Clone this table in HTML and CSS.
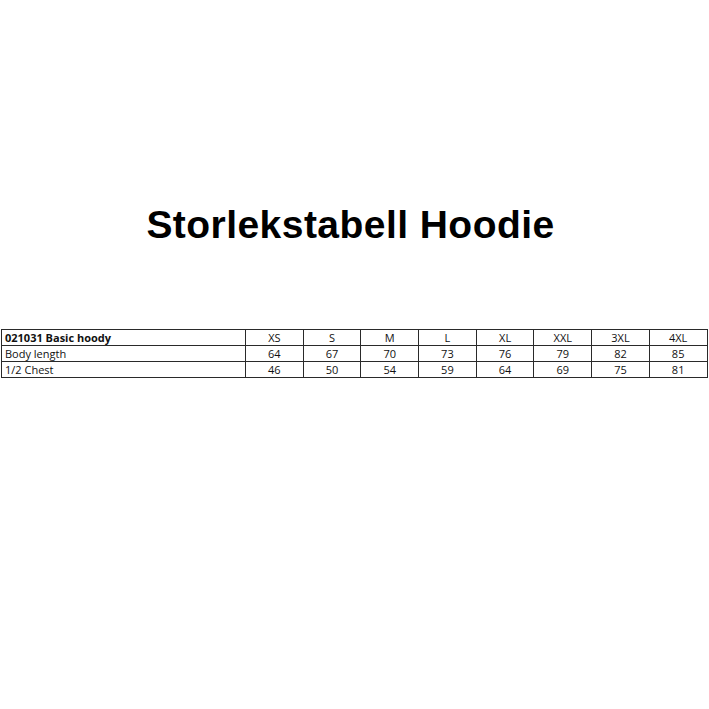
FILE: index.html
```html
<!DOCTYPE html>
<html>
<head>
<meta charset="utf-8">
<link rel="stylesheet" href="styles.css">
</head>
<body>
<div class="page">
  <h1 class="title">Storlekstabell Hoodie</h1>
  <table class="sizes">
    <colgroup>
      <col class="c-label">
      <col span="8" class="c-size">
    </colgroup>
    <tr class="head">
      <td class="label">021031 Basic hoody</td>
      <td>XS</td><td>S</td><td>M</td><td>L</td><td>XL</td><td>XXL</td><td>3XL</td><td>4XL</td>
    </tr>
    <tr>
      <td class="label">Body length</td>
      <td>64</td><td>67</td><td>70</td><td>73</td><td>76</td><td>79</td><td>82</td><td>85</td>
    </tr>
    <tr>
      <td class="label">1/2 Chest</td>
      <td>46</td><td>50</td><td>54</td><td>59</td><td>64</td><td>69</td><td>75</td><td>81</td>
    </tr>
  </table>
</div>
</body>
</html>
```
FILE: styles.css
```css
html, body {
  margin: 0;
  padding: 0;
  background: #fff;
}
.page {
  width: 709px;
  height: 709px;
  padding-top: 203px;
  box-sizing: border-box;
}
.title {
  margin: 0;
  font-family: "Liberation Sans", Arial, sans-serif;
  font-weight: bold;
  font-size: 39px;
  letter-spacing: 0.45px;
  line-height: 44px;
  text-align: center;
  color: #000;
  padding-right: 8px;
}
.sizes {
  margin: 82px 0 0 1px;
  border-collapse: collapse;
  table-layout: fixed;
  width: 706px;
  font-family: "Open Sans", "Liberation Sans", sans-serif;
  font-size: 11px;
  color: #111;
}
.c-label { width: 244px; }
.c-size { width: 57.7px; }
.sizes td {
  border: 1px solid #2a2a2a;
  height: 15px;
  padding: 0 2px;
  line-height: 14px;
  text-align: center;
  white-space: nowrap;
  overflow: hidden;
}
.sizes td.label {
  text-align: left;
  padding-left: 3px;
}
.head td.label {
  font-weight: bold;
}
```
